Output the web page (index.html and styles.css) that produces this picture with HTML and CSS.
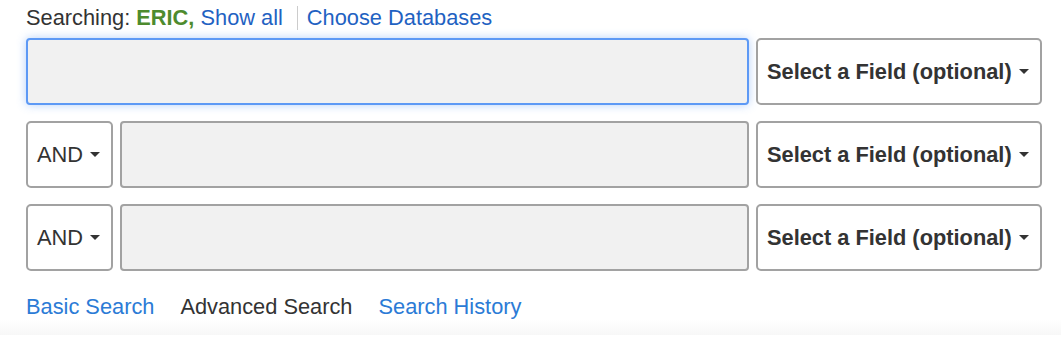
FILE: index.html
```html
<!DOCTYPE html>
<html lang="en">
<head>
    <meta charset="utf-8">
    <title>Advanced Search</title>
    <link rel="stylesheet" href="styles.css">
</head>
<body>
    <div class="search">

        <!-- Database line -->
        <p class="databases">Searching: <span class="db">ERIC,</span> <a href="#">Show all</a><span class="sep"></span><a href="#">Choose Databases</a></p>

        <!-- Search rows -->
        <div class="row">
            <input class="term focus" type="text">
            <button class="field">Select a Field (optional)<span class="caret"></span></button>
        </div>
        <div class="row">
            <button class="bool">AND<span class="caret"></span></button>
            <input class="term" type="text">
            <button class="field">Select a Field (optional)<span class="caret"></span></button>
        </div>
        <div class="row">
            <button class="bool">AND<span class="caret"></span></button>
            <input class="term" type="text">
            <button class="field">Select a Field (optional)<span class="caret"></span></button>
        </div>

        <!-- Links below the form -->
        <p class="links">
            <a href="#">Basic Search</a>
            <span>Advanced Search</span>
            <a href="#">Search History</a>
        </p>
    </div>
    <div class="shade"></div>
</body>
</html>
```
FILE: styles.css
```css
body {
    margin: 0;
    background-color: white;
    font-family: "Liberation Sans", Arial, sans-serif;
    font-size: 21.8px;
    color: #333;
}

.search {
    padding: 5px 19px 0 26px;
}

a {
    color: #1f62c2;
    text-decoration: none;
}

.databases {
    margin: 0 0 8px 0;
    line-height: 25px;
    height: 25px;
}

.db {
    color: #4d8b2e;
    font-weight: bold;
}

.sep {
    display: inline-block;
    width: 1px;
    height: 24px;
    background-color: #ccc;
    margin: 0 9px 0 14px;
    vertical-align: -5px;
}

.row {
    display: flex;
    gap: 7px;
    margin-bottom: 16px;
    height: 67px;
}

.term {
    flex: 1;
    margin: 0;
    box-sizing: border-box;
    height: 67px;
    background-color: #f1f1f1;
    border: 2px solid #a2a2a2;
    border-radius: 4px;
    font: inherit;
}

.term.focus {
    border-color: #5d99f5;
    box-shadow: 0 0 10px rgba(93, 153, 245, 0.45);
    outline: none;
}

.field,
.bool {
    box-sizing: border-box;
    height: 67px;
    margin: 0;
    background-color: white;
    border: 2px solid #a2a2a2;
    border-radius: 5px;
    font: inherit;
    color: #333;
    display: flex;
    align-items: center;
    padding: 0 9px;
    gap: 7px;
}

.field {
    width: 286px;
    font-weight: bold;
}

.bool {
    width: 87px;
}

.caret {
    display: inline-block;
    width: 0;
    height: 0;
    border-top: 5px solid #333;
    border-left: 5.5px solid transparent;
    border-right: 5.5px solid transparent;
}

.links {
    margin: 23px 0 0 0;
    line-height: 25px;
    display: flex;
    gap: 26px;
}

.links a {
    color: #2b7bd6;
}

.shade {
    height: 16px;
    background: linear-gradient(white, #f7f7f7);
}
```
